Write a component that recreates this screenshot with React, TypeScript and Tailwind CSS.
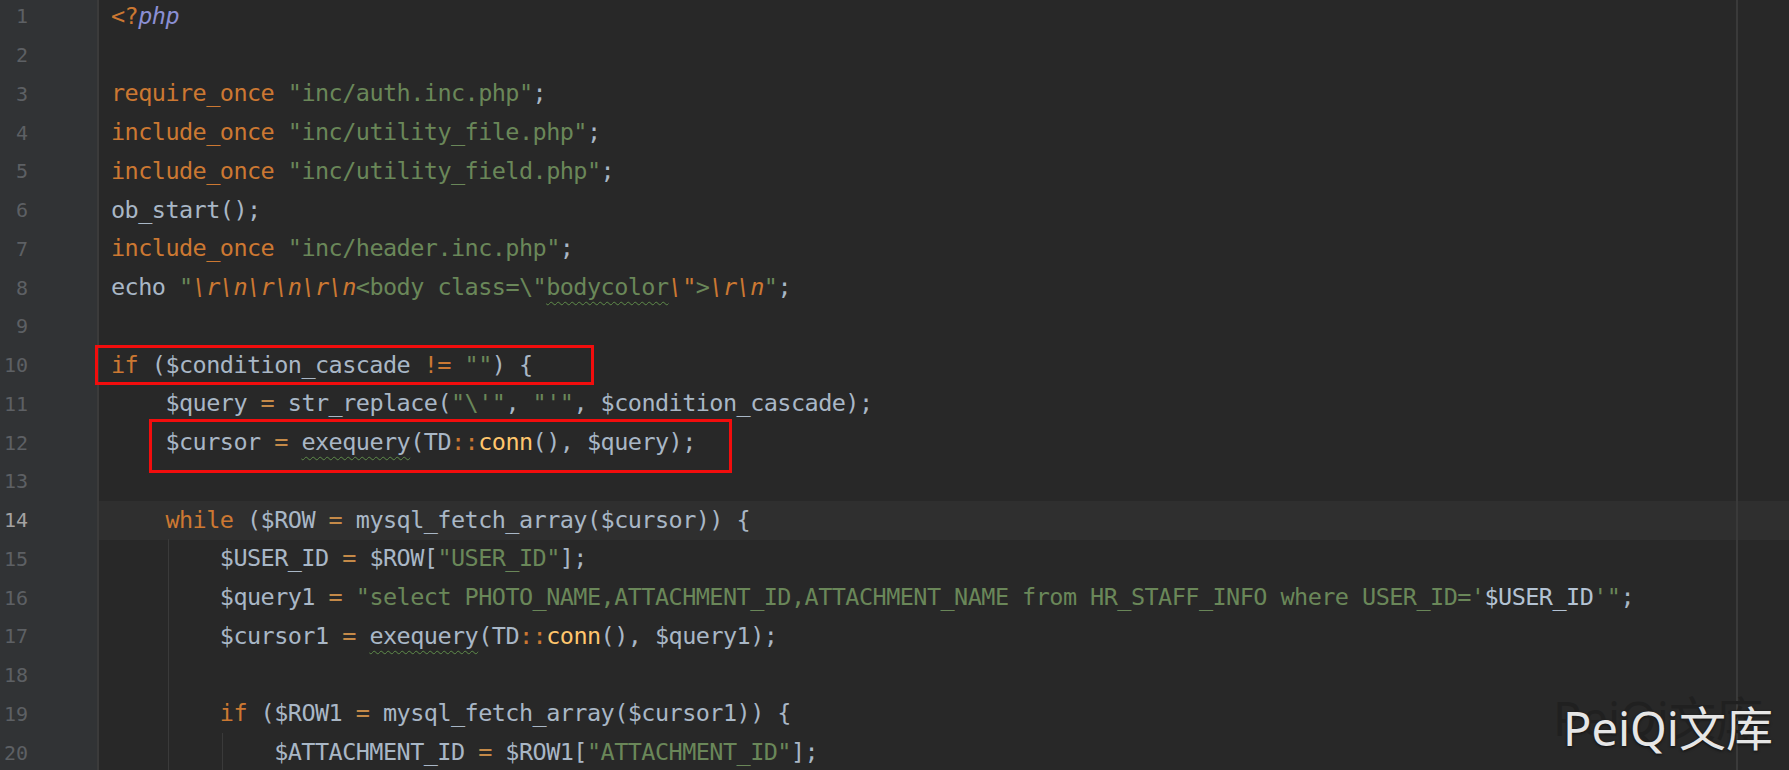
import React from "react";

type Tok = [string, string?];

// token colours (Darcula-ish)
const K = "text-[#cc7832]";
const S = "text-[#6a8759]";
const T = "text-[#a9b7c6]";
const E = "text-[#cc7832] italic";
const F = "text-[#ffc66d]";
const O = "text-[#c58a48]";
const W = "text-[#a9b7c6] underline decoration-wavy decoration-[#5f8c4a] decoration-1 underline-offset-[6px]";
const WS = "text-[#6a8759] underline decoration-wavy decoration-[#5f8c4a] decoration-1 underline-offset-[6px]";

const lines: Tok[][] = [
  [["<?", K], ["php", "text-[#8b8fd4] italic"]],
  [],
  [["require_once", K], [" "], ['"inc/auth.inc.php"', S], [";", T]],
  [["include_once", K], [" "], ['"inc/utility_file.php"', S], [";", T]],
  [["include_once", K], [" "], ['"inc/utility_field.php"', S], [";", T]],
  [["ob_start();", T]],
  [["include_once", K], [" "], ['"inc/header.inc.php"', S], [";", T]],
  [
    ["echo ", T],
    ['"', S],
    ["\\r\\n\\r\\n\\r\\n", E],
    ['<body class=\\"', S],
    ["bodycolor", WS],
    ['\\"', E],
    [">", S],
    ["\\r\\n", E],
    ['"', S],
    [";", T],
  ],
  [],
  [["if", K], [" ($condition_cascade ", T], ["!=", K], [" "], ['""', S], [") {", T]],
  [
    ["    $query ", T],
    ["=", O],
    [" str_replace(", T],
    ['"\\\'"', S],
    [", ", T],
    ['"\'"', S],
    [", $condition_cascade);", T],
  ],
  [
    ["    $cursor ", T],
    ["=", O],
    [" "],
    ["exequery", W],
    ["(TD", T],
    ["::", K],
    ["conn", F],
    ["(), $query);", T],
  ],
  [],
  [["    while", K], [" ($ROW ", T], ["=", O], [" mysql_fetch_array($cursor)) {", T]],
  [["        $USER_ID ", T], ["=", O], [" $ROW[", T], ['"USER_ID"', S], ["];", T]],
  [
    ["        $query1 ", T],
    ["=", O],
    [" "],
    ['"select PHOTO_NAME,ATTACHMENT_ID,ATTACHMENT_NAME from HR_STAFF_INFO where USER_ID=\'', S],
    ["$USER_ID", "text-[#b4c3d4]"],
    ["'\"", S],
    [";", T],
  ],
  [
    ["        $cursor1 ", T],
    ["=", O],
    [" "],
    ["exequery", W],
    ["(TD", T],
    ["::", K],
    ["conn", F],
    ["(), $query1);", T],
  ],
  [],
  [["        if", K], [" ($ROW1 ", T], ["=", O], [" mysql_fetch_array($cursor1)) {", T]],
  [["            $ATTACHMENT_ID ", T], ["=", O], [" $ROW1[", T], ['"ATTACHMENT_ID"', S], ["];", T]],
];

export default function App() {
  return (
    <div className="relative h-[770px] w-[1789px] overflow-hidden bg-[#282828] font-['DejaVu_Sans_Mono',monospace]">
      <div className="-mt-[3px] flex flex-col">
        {lines.map((toks, i) => {
          const current = i === 13;
          return (
            <div key={i} className="flex h-[38.75px]">
              {/* gutter */}
              <div className="flex w-[99px] shrink-0 items-center border-r-2 border-[#3b3b3b] bg-[#313335]">
                <span
                  className={`w-[28px] text-right text-[20px] ${
                    current ? "text-[#a4a3a3]" : "text-[#5d6064]"
                  }`}
                >
                  {i + 1}
                </span>
              </div>
              {/* code */}
              <div
                className={`flex flex-1 items-center whitespace-pre pl-[12px] text-[23.5px] tracking-[-0.55px] ${
                  current ? "bg-[#2f2f2f]" : ""
                }`}
              >
                {toks.map(([text, cls], j) => (
                  <span key={j} className={cls ?? T}>
                    {text}
                  </span>
                ))}
              </div>
            </div>
          );
        })}
      </div>

      {/* indent guides */}
      <div className="absolute left-[168px] top-[539px] bottom-0 w-px bg-[#3a3a3a]" />
      <div className="absolute left-[222px] top-[733px] bottom-0 w-px bg-[#3a3a3a]" />

      {/* right margin */}
      <div className="absolute left-[1736px] top-0 bottom-0 w-[2px] bg-[#3a3a3a]" />

      {/* annotation boxes */}
      <div className="absolute left-[95px] top-[345px] h-[40px] w-[499px] border-[3px] border-[#f20d0d]" />
      <div className="absolute left-[149px] top-[419px] h-[54px] w-[583px] border-[3px] border-[#f20d0d]" />

      {/* watermark */}
      <div className="absolute left-[1563px] top-[705px] whitespace-nowrap font-['Noto_Sans','Noto_Sans_CJK_SC',sans-serif] text-[47px] leading-none text-[#e6e6e6] [text-shadow:-10px_-10px_0_#202020,0_1px_3px_rgba(0,0,0,0.7)]">
        PeiQi文库
      </div>
    </div>
  );
}
